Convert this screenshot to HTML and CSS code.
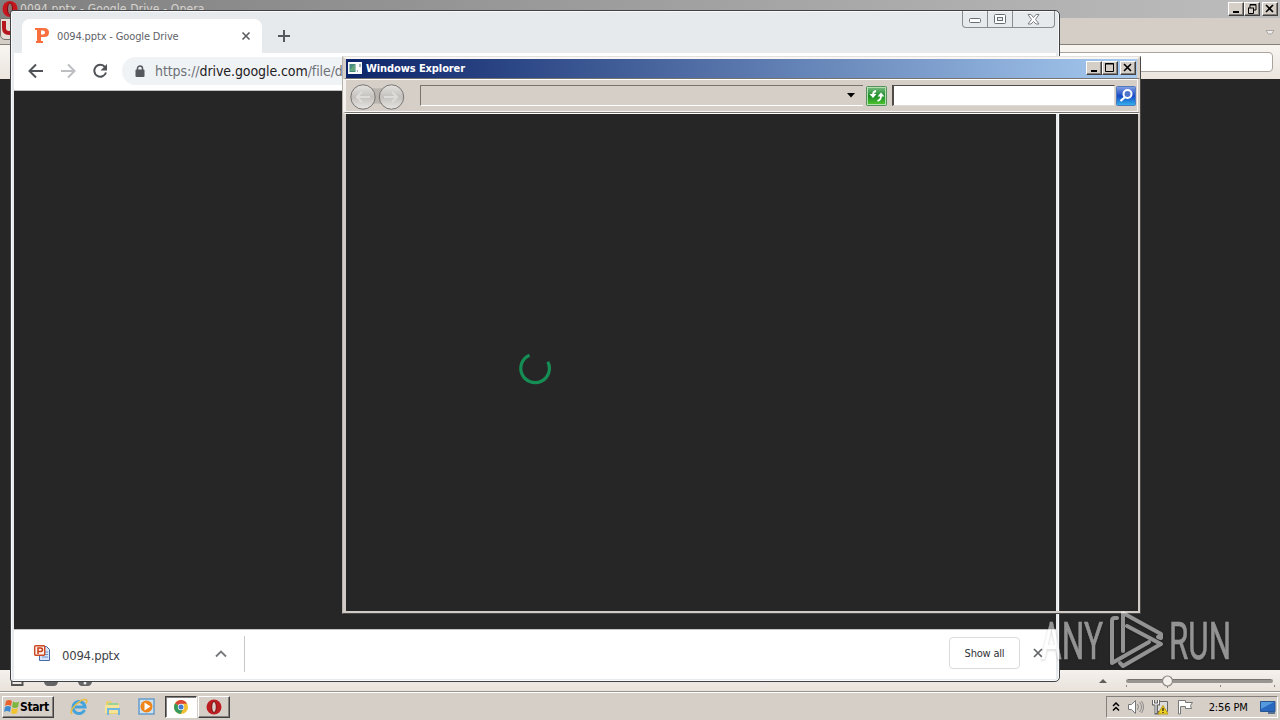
FILE: index.html
```html
<!DOCTYPE html>
<html lang="en">

<head>
    <meta charset="UTF-8">
    <title>0094.pptx - Google Drive</title>
    <link rel="stylesheet" href="styles.css">
</head>

<body>
    <div class="desktop">
        <!-- Opera, maximized behind everything -->
        <div class="opera">
            <div class="opera-title">
                <svg class="opera-logo" width="17" height="18" viewBox="0 0 17 18">
                    <ellipse cx="9" cy="9" rx="7.500" ry="8" fill="#c5161d"/>
                    <ellipse cx="9" cy="9" rx="2.500" ry="6" fill="#8c7774" stroke="#7d090d"/>
                </svg>
                <span class="opera-caption">0094.pptx - Google Drive - Opera</span>
                <div class="win-buttons">
                    <button class="win-btn"><svg width="14" height="12"><path d="M4 9h6" stroke="#000" stroke-width="2"/></svg></button>
                    <button class="win-btn"><svg width="14" height="12"><path d="M5 5V1.500h6V7H9M5 2h6" fill="none" stroke="#000"/><path d="M3 5h6M3.500 5v5.500h5V5" fill="none" stroke="#000"/></svg></button>
                    <button class="win-btn close"><svg width="14" height="12"><path d="M3 2l7 7M10 2l-7 7" stroke="#000" stroke-width="1.600"/></svg></button>
                </div>
            </div>
            <div class="opera-tabs">
                <div class="opera-menu">
                    <svg width="13" height="16"><path d="M3 2v7q0 5 5 5h5" fill="none" stroke="#b5171c" stroke-width="4"/></svg>
                </div>
                <svg class="opera-trash" width="10" height="7"><path d="M1 1.500h8L6.500 5h-3z" fill="#eee" stroke="#aaa6a2"/></svg>
            </div>
            <div class="opera-bar"><div class="opera-address"></div></div>
            <div class="opera-page"></div>
            <div class="opera-status">
                <svg class="status-icons" width="84" height="16">
                    <path d="M.5 3v12h11v-5" fill="none" stroke="#555" stroke-width="2"/>
                    <path d="M33 12h14q-1 4-4 4h-6q-3 0-4-4zM67 12h14q-1 4-4 4h-6q-3 0-4-4z" fill="#666"/>
                    <circle cx="74" cy="13" r="1.500" fill="#eee"/>
                </svg>
                <svg class="zoom-slider" width="178" height="20">
                    <path d="M0 13l4-4 4 4z" fill="#625d59"/>
                    <path d="M29 11h143" stroke="#999490" stroke-width="4" stroke-linecap="round"/>
                    <path d="M29 9.500h143" stroke="#77726f"/>
                    <path d="M27.500 15v2M68.500 15v3M121.500 15v2M175.500 15v2" stroke="#8b8682"/>
                    <circle cx="68.500" cy="11" r="5" fill="#f4f1ed" stroke="#8c8784" stroke-width="1.200"/>
                </svg>
            </div>
        </div>

        <!-- Chrome -->
        <div class="chrome">
            <div class="chrome-head">
                <div class="chrome-tab">
                    <svg class="tab-icon" width="14" height="16"><path d="M0 0h9q5 0 5 4.500T9 9H6v4h2v2H1v-2h1V2H0zM6 2.500v4h2q2 0 2-2t-2-2z" fill="#f9703e" fill-rule="evenodd"/></svg>
                    <span class="tab-title">0094.pptx - Google Drive</span>
                    <svg class="tab-close" width="10" height="10"><path d="M1.500 1.500l7 7M8.500 1.500l-7 7" stroke="#5a5d61" stroke-width="1.600"/></svg>
                </div>
                <svg class="new-tab" width="12" height="12"><path d="M6 0v12M0 6h12" stroke="#55585c" stroke-width="2"/></svg>
                <div class="chrome-buttons">
                    <span><svg width="12" height="6"><rect x=".5" y=".5" width="11" height="4" rx="1" fill="#fff" stroke="#696e75"/></svg></span>
                    <span><svg width="12" height="11"><rect x=".5" y=".5" width="11" height="9" rx="1" fill="#fff" stroke="#696e75"/><rect x="3.500" y="3.500" width="5" height="3" fill="#e8ebed" stroke="#696e75"/></svg></span>
                    <span><svg width="13" height="11"><path d="M1 .5h3l2.500 3 2.500-3h3L8.500 5.500l3.500 4.500H9L6.500 7.500 4 10H1l3.500-4.500z" fill="#fff" stroke="#7b7f84"/></svg></span>
                </div>
            </div>
            <div class="chrome-toolbar">
                <svg width="16" height="16"><path d="M15 8H2M8 1.500L1.500 8 8 14.500" fill="none" stroke="#505357" stroke-width="2"/></svg>
                <svg width="16" height="16"><path d="M1 8h13M8 1.500L14.500 8 8 14.500" fill="none" stroke="#bcbec1" stroke-width="2"/></svg>
                <svg width="16" height="16"><path d="M13 4A6 6 0 1 0 14 9.500" fill="none" stroke="#505357" stroke-width="2"/><path d="M15 1v6.500H8.500z" fill="#505357"/></svg>
                <div class="omnibox">
                    <svg width="10" height="13"><path d="M2.500 6V3.500a2.500 2.500 0 0 1 5 0V6" fill="none" stroke="#55585c" stroke-width="1.500"/><rect x="0.500" y="4.500" width="9" height="7.500" rx="1" fill="#55585c"/></svg>
                    <span class="url">https://<b>drive.google.com</b>/file/d</span>
                </div>
            </div>
            <div class="chrome-page">
                <svg width="34" height="34"><path d="M11.500 4.200A14.300 14.300 0 1 0 29.800 10.800" fill="none" stroke="#158d54" stroke-width="3.200"/></svg>
            </div>
            <div class="downloads">
                <div class="download-item">
                    <svg width="16" height="17">
                        <path d="M5.500 1.500h7l3 3v11h-10z" fill="#d7e5fa" stroke="#4569a9"/>
                        <path d="M10 7h4M10 9.500h4M8 12h6" stroke="#6b92cc"/>
                        <rect x=".7" y=".7" width="10" height="9.600" rx="1" fill="#fff1e8" stroke="#cb4a24" stroke-width="1.400"/>
                        <path d="M4 9V3h2.500q2 0 2 1.700T6.500 6.500H4" fill="none" stroke="#c63d19" stroke-width="1.500"/>
                    </svg>
                    <span class="download-name">0094.pptx</span>
                    <svg class="download-arrow" width="12" height="8"><path d="M1 6.500L6 1.500l5 5" fill="none" stroke="#75787c" stroke-width="1.800"/></svg>
                </div>
                <button class="show-all">Show all</button>
                <svg class="shelf-close" width="10" height="10"><path d="M1 1l8 8M9 1L1 9" stroke="#606367" stroke-width="1.700"/></svg>
            </div>
        </div>

        <!-- Windows Explorer, the client area is not painted yet -->
        <div class="explorer">
            <div class="explorer-title">
                <svg width="14" height="12"><rect width="14" height="12" fill="#f7faf8"/><rect x="1.500" y="2" width="6" height="8" fill="#478a82"/><path d="M2 8l4-5h1v6H2z" fill="#65a779"/><path d="M9 9h1M12 2v3" stroke="#567" stroke-width="1"/></svg>
                <span class="explorer-caption">Windows Explorer</span>
                <div class="win-buttons">
                    <button class="win-btn"><svg width="14" height="12"><path d="M4 9h6" stroke="#000" stroke-width="2"/></svg></button>
                    <button class="win-btn"><svg width="14" height="12"><path d="M2.500 1.500h8v8h-8zM2 2h9" fill="none" stroke="#000"/></svg></button>
                    <button class="win-btn close"><svg width="14" height="12"><path d="M3 2l7 7M10 2l-7 7" stroke="#000" stroke-width="1.600"/></svg></button>
                </div>
            </div>
            <div class="explorer-bar">
                <svg class="travel" width="56" height="28">
                    <defs>
                        <linearGradient id="ball" x2="0" y2="1"><stop offset="0" stop-color="#e5e3e0"/><stop offset=".5" stop-color="#c3c0bd"/><stop offset="1" stop-color="#e8e6e4"/></linearGradient>
                    </defs>
                    <path d="M13 4q15 5 30 0v20q-15-5-30 0z" fill="#b9b4ae"/>
                    <circle cx="14" cy="15" r="12.200" fill="url(#ball)" stroke="#777471"/>
                    <circle cx="42.500" cy="15" r="12.200" fill="url(#ball)" stroke="#777471"/>
                    <path d="M21 15H8M13 10l-5 5 5 5M35 15h13M43 10l5 5-5 5" fill="none" stroke="#dedcda" stroke-width="2.200"/>
                </svg>
                <div class="address"><svg width="8" height="5"><path d="M0 0h8L4 4.500z" fill="#000"/></svg></div>
                <svg class="refresh" width="21" height="20">
                    <defs><linearGradient id="green" x2="0" y2="1"><stop offset="0" stop-color="#7ebd86"/><stop offset=".5" stop-color="#1d8d2a"/><stop offset="1" stop-color="#53ca2e"/></linearGradient></defs>
                    <rect x=".5" y=".5" width="20" height="19" rx="1" fill="url(#green)" stroke="#559158"/>
                    <rect x="1.500" y="1.500" width="18" height="17" fill="none" stroke="#b4dfb2"/>
                    <path d="M10 5Q7 5.500 7 9M11.500 15q3.500-1 3.500-5" fill="none" stroke="#fff" stroke-width="1.800"/>
                    <path d="M3.500 8h7L7 12zM11.500 10.500h7L15 6.500z" fill="#fff"/>
                </svg>
                <div class="search"></div>
                <svg class="search-btn" width="20" height="20">
                    <defs><linearGradient id="blue" x2="0" y2="1"><stop offset="0" stop-color="#86a2e4"/><stop offset=".5" stop-color="#1648c4"/><stop offset="1" stop-color="#34b6ee"/></linearGradient></defs>
                    <rect x=".5" y=".5" width="19" height="19" rx="1" fill="url(#blue)" stroke="#5179bd"/>
                    <circle cx="11.500" cy="8" r="4" fill="#4f75cb" stroke="#fff" stroke-width="2"/>
                    <path d="M8.500 11.500L4.500 15" stroke="#fff" stroke-width="2.200"/>
                </svg>
            </div>
            <div class="explorer-view"></div>
        </div>

        <div class="taskbar">
            <button class="start">
                <svg width="17" height="16">
                    <path d="M3 2q3-2 6 0L8 7Q5 5 2 7z" fill="#e9622c"/>
                    <path d="M10 2.500q3 2 6 0L15 8q-3 2-6 0z" fill="#7cb63e"/>
                    <path d="M2 8q3-2 6 0l-1 5q-3-2-6 0z" fill="#408bd0"/>
                    <path d="M9 9q3 2 6 0l-1 5q-3 2-6 0z" fill="#f3c231"/>
                </svg>
                <span>Start</span>
            </button>
            <div class="quick">
                <svg width="18" height="18">
                    <path d="M14.500 12A6 6 0 1 1 15 9H5" fill="none" stroke="#45a3dc" stroke-width="3"/>
                    <path d="M2 16Q-1 13 6 6.500T16.500 2q1 1-.5 3.500" fill="none" stroke="#e9bd43" stroke-width="1.500"/>
                </svg>
                <svg width="18" height="18">
                    <path d="M2 3h5l1 2h7v11H2z" fill="#e8cf72"/>
                    <path d="M4 5h10v4H4z" fill="#9ad397"/>
                    <path d="M1 7h14v8H1z" fill="#f6e498"/>
                    <path d="M4 17v-6h11v6" fill="none" stroke="#72b7de" stroke-width="2"/>
                </svg>
                <svg width="18" height="18">
                    <rect x="1" y="1" width="15" height="15" fill="#cce3f4" stroke="#6298ca" stroke-width="1.400"/>
                    <circle cx="8.500" cy="8.500" r="6" fill="#ef8519"/>
                    <path d="M6.500 4.500v8l6-4z" fill="#fff"/>
                </svg>
            </div>
            <div class="task active">
                <svg width="14" height="14" viewBox="0 0 14 14">
                    <circle cx="7" cy="7" r="7" fill="#f2c032"/>
                    <path d="M7 7L1 3.500A7 7 0 0 1 13 3.500L7 4z" fill="#db4638"/>
                    <path d="M1 3.500A7 7 0 0 0 6.500 14L9.500 8.500 7 7z" fill="#34995a"/>
                    <circle cx="7" cy="7" r="3.200" fill="#fff"/>
                    <circle cx="7" cy="7" r="2.500" fill="#4479cf"/>
                </svg>
            </div>
            <div class="task">
                <svg width="16" height="16">
                    <ellipse cx="8" cy="8" rx="7.500" ry="7.500" fill="#bb1d20"/>
                    <ellipse cx="8" cy="8" rx="2.300" ry="5.500" fill="#ddd1cc" stroke="#7b0c0e"/>
                </svg>
            </div>
            <div class="tray">
                <svg width="8" height="10"><path d="M1 4l3-3 3 3M1 8.500l3-3 3 3" fill="none" stroke="#000" stroke-width="1.500"/></svg>
                <svg width="18" height="16">
                    <path d="M1.500 5.500h3l4-4v13l-4-4h-3z" fill="#fff" stroke="#777"/>
                    <path d="M10.500 5q2 3 0 6M12.500 3q4 5 0 10M14.500 2q4 6 0 12" fill="none" stroke="#8c8986"/>
                </svg>
                <svg width="18" height="16">
                    <path d="M5.500 2.500h10v10h-10z" fill="#dcdcda" stroke="#666"/>
                    <path d="M1.500 1v4h5V1M4 5v9h3" fill="none" stroke="#666" stroke-width="3"/>
                    <path d="M1.500 1v4h5V1M4 5v9" fill="none" stroke="#fff"/>
                    <path d="M6 15L11 6.500 16 15z" fill="#f2d321" stroke="#bd9b12"/>
                    <path d="M11 9v3M11 13v1" stroke="#222" stroke-width="1.300"/>
                </svg>
                <svg width="18" height="16"><path d="M1.500 15V1.500h7v2h7l-2 3 1 3h-6v-2h-5V15z" fill="#fff" stroke="#777"/></svg>
                <span class="clock">2:56 PM</span>
                <svg width="16" height="14"><path d="M.5 1.500h14.500v10H.5z" fill="#2869bf" stroke="#285490"/><path d="M1 2h13L1 9z" fill="#5599de"/><path d="M8 13h7" stroke="#5a7291" stroke-width="2"/></svg>
            </div>
        </div>

        <svg class="watermark" width="230" height="84">
            <g class="watermark-text">
                <text x="2" y="51" textLength="62" lengthAdjust="spacingAndGlyphs">ANY</text>
                <text x="130" y="51" textLength="62" lengthAdjust="spacingAndGlyphs">RUN</text>
            </g>
            <g fill="none" stroke="#fff" stroke-width="4" stroke-linejoin="round" stroke-linecap="round">
                <path d="M78 10h-2q-3 0-3 3v42l37-21"/>
                <path d="M84 43V5l38 21v4l-3-1M88 18l34 18-38 22-3-3"/>
            </g>
        </svg>
    </div>
</body>

</html>
```
FILE: styles.css
```css
* {
    box-sizing: border-box;
}

body {
    margin: 0;
    font-family: "DejaVu Sans Condensed", "DejaVu Sans", sans-serif;
    font-size: 11px;
    overflow: hidden;
}

svg {
    display: block;
    flex-shrink: 0;
}

button {
    font-family: inherit;
    padding: 0;
}

.desktop {
    position: relative;
    width: 1280px;
    height: 720px;
    overflow: hidden;
    display: flex;
    flex-direction: column;
}

/* classic window buttons */
.win-buttons {
    display: flex;
    margin-left: auto;
}

.win-btn {
    width: 16px;
    height: 14px;
    background: #d6cfc8;
    border: 1px solid;
    border-color: #fff #404040 #404040 #fff;
    box-shadow: inset -1px -1px #85807b;
    overflow: hidden;
}

.win-btn.close {
    margin-left: 2px;
}

/* opera */
.opera {
    height: 692px;
    display: flex;
    flex-direction: column;
    border-bottom: 1px solid #99948e;
}

.opera-title {
    height: 18px;
    display: flex;
    align-items: flex-start;
    padding: 2px 2px 0 1px;
    background: linear-gradient(90deg, #808080, #bdbdbd);
}

.opera-logo {
    margin-top: -2px;
}

.opera-caption {
    margin-left: 2px;
    color: #d8d4cf;
    font-size: 12px;
    line-height: 14px;
    letter-spacing: 0.14px;
}

.opera-tabs {
    height: 27px;
    display: flex;
    justify-content: space-between;
    background: #d5cec7;
    border-bottom: 1px solid #858079;
}

.opera-menu {
    width: 13px;
    height: 22px;
    background: #e3ddd6;
    border: 1px solid #77716c;
    border-radius: 0 0 0 5px;
}

.opera-trash {
    margin: 11px 5px 0 0;
}

.opera-bar {
    height: 34px;
    display: flex;
    align-items: center;
    padding: 0 7px 0 120px;
    background: linear-gradient(#f8f5f1, #ebe5de);
}

.opera-address {
    flex: 1;
    height: 20px;
    background: #fff;
    border: 1px solid #aaa49d;
    border-radius: 4px;
}

.opera-page {
    flex: 1;
    background: #262626;
}

.opera-status {
    height: 21px;
    display: flex;
    justify-content: space-between;
    background: linear-gradient(#f5f1ed, #e9e2db);
}

.status-icons {
    margin-left: 11px;
}

.zoom-slider {
    margin-right: 3px;
}

/* chrome */
.chrome {
    position: absolute;
    left: 10px;
    top: 10px;
    width: 1050px;
    height: 672px;
    display: flex;
    flex-direction: column;
    background: #e7eaed;
    border: 1px solid #3e4145;
    border-radius: 3px 5px 5px 3px;
    box-shadow: inset 0 0 0 1px #fafafa;
    padding: 0 3px 2px;
}

.chrome-head {
    height: 42px;
    display: flex;
}

.chrome-tab {
    width: 240px;
    height: 34px;
    margin: 8px 0 0 8px;
    padding: 0 11px 0 13px;
    display: flex;
    align-items: center;
    background: #fff;
    border-radius: 8px 8px 0 0;
}

.tab-title {
    margin-left: 8px;
    color: #5f6368;
    letter-spacing: -0.14px;
}

.tab-close {
    margin-left: auto;
}

.new-tab {
    margin: 19px 0 0 16px;
}

.chrome-buttons {
    display: flex;
    height: 17px;
    margin: 0 1px 0 auto;
    border: 1px solid #898d91;
    border-top: 0;
    border-radius: 0 0 4px 4px;
}

.chrome-buttons span {
    width: 25px;
    display: flex;
    align-items: center;
    justify-content: center;
    border-right: 1px solid #898d91;
}

.chrome-buttons span:first-child {
    padding-top: 3px;
}

.chrome-buttons span:last-child {
    width: 41px;
    border: 0;
}

.chrome-toolbar {
    height: 38px;
    display: flex;
    align-items: center;
    gap: 16px;
    padding: 0 0 1px 14px;
    background: #fff;
    border-bottom: 1px solid #bfc1c3;
}

.omnibox {
    flex: 1;
    height: 28px;
    margin: 0 80px 0 -2px;
    padding-left: 13px;
    display: flex;
    align-items: center;
    background: #f0f3f5;
    border-radius: 14px;
}

.url {
    margin-left: 10px;
    color: #6d7176;
    font-size: 14px;
    letter-spacing: -0.08px;
}

.url b {
    color: #1f2123;
    font-weight: normal;
}

.chrome-page {
    flex: 1;
    display: flex;
    align-items: center;
    justify-content: center;
    padding-top: 15px;
    background: #262626;
}

.downloads {
    height: 50px;
    display: flex;
    align-items: center;
    padding-bottom: 2px;
    background: #fff;
    border-top: 1px solid #c3c3c3;
}

.download-item {
    width: 231px;
    height: 36px;
    display: flex;
    align-items: center;
    padding: 0 17px 0 20px;
    border-right: 1px solid #c7c9cb;
}

.download-name {
    margin: 4px 0 0 12px;
    color: #404347;
    font-size: 13px;
    letter-spacing: -0.25px;
}

.download-arrow {
    margin-left: auto;
}

.show-all {
    width: 71px;
    height: 32px;
    margin: -1px 13px 0 auto;
    background: #fff;
    border: 1px solid #d9dbde;
    border-radius: 4px;
    color: #303236;
    font-size: 11px;
    letter-spacing: -0.2px;
}

.shelf-close {
    margin: -1px 13px 0 0;
}

/* explorer */
.explorer {
    position: absolute;
    left: 342px;
    top: 56px;
    width: 799px;
    height: 558px;
    display: flex;
    flex-direction: column;
    border: 1px solid;
    border-color: #e4e0dc #4b4947 #4b4947 #b7b2ac;
}

.explorer-title {
    height: 21px;
    display: flex;
    align-items: center;
    padding: 0 1px 1px 2px;
    background: linear-gradient(90deg, #0c2469, #a6caf0);
    border: solid #d6cfc8;
    border-width: 2px 3px 0 3px;
    border-top-color: #f8f6f4;
}

.explorer-caption {
    margin-left: 4px;
    color: #fff;
    font-weight: bold;
    letter-spacing: -0.1px;
}

.explorer-bar {
    height: 35px;
    display: flex;
    align-items: center;
    padding: 0 2px 0 3px;
    background: #d6cfc8;
    border: 1px solid #77736f;
    border-width: 1px 2px 1px 3px;
    border-left-color: #f4f1ee;
    border-right-color: #d6cfc8;
    box-shadow: inset 0 1px #fff, inset -1px -1px #f8f6f4;
}

.travel {
    margin-right: -1px;
}

.address {
    width: 443px;
    height: 21px;
    margin-left: 16px;
    display: flex;
    align-items: center;
    justify-content: flex-end;
    padding-right: 8px;
    border-left: 1px solid #77736f;
    border-top: 1px solid #77736f;
    border-bottom: 1px solid #fff;
}

.refresh {
    margin-left: 3px;
}

.search {
    flex: 1;
    height: 21px;
    margin: 0 1px 0 5px;
    background: #fff;
    border: 1px solid #e0dbd5;
    border-left: 2px solid #4e4b49;
    border-top-color: #4e4b49;
}

.explorer-view {
    flex: 1;
    border: solid #d0cbc6;
    border-width: 1px 2px 2px 3px;
    border-top-color: #fff;
}

/* taskbar */
.taskbar {
    height: 28px;
    display: flex;
    align-items: center;
    padding: 1px 2px 0;
    background: #d6cfc8;
    border-top: 1px solid #fff;
}

.start {
    width: 52px;
    height: 22px;
    display: flex;
    align-items: center;
    background: #d6cfc8;
    border: 1px solid;
    border-color: #fff #404040 #404040 #fff;
    box-shadow: inset -1px -1px #85807b;
    font-size: 12px;
    font-weight: bold;
    letter-spacing: -0.4px;
    color: #000;
}

.quick {
    display: flex;
    gap: 16px;
    margin: 0 9px 0 16px;
}

.task {
    width: 32px;
    height: 22px;
    margin-right: 1px;
    display: flex;
    align-items: center;
    justify-content: center;
    border: 1px solid;
    border-color: #fff #404040 #404040 #fff;
    box-shadow: inset -1px -1px #85807b;
}

.task.active {
    background: #fff;
    border-color: #404040 #fff #fff #404040;
    box-shadow: inset 1px 1px #85807b;
}

.tray {
    width: 172px;
    height: 22px;
    margin-left: auto;
    display: flex;
    align-items: center;
    justify-content: space-between;
    padding: 0 1px 0 5px;
    border: 1px solid;
    border-color: #85807b #fff #fff #85807b;
}

.clock {
    margin: 0 5px 0 6px;
    color: #000;
    letter-spacing: -0.1px;
}

/* watermark */
.watermark {
    position: absolute;
    left: 1039px;
    top: 608px;
    opacity: 0.5;
    overflow: visible;
    filter: drop-shadow(0 1px 1px rgba(0, 0, 0, 0.4));
}

.watermark-text {
    font-family: Roboto, sans-serif;
    font-size: 52px;
    font-weight: 400;
    fill: #fff;
    stroke: #fff;
    stroke-width: 0.6px;
}
```
